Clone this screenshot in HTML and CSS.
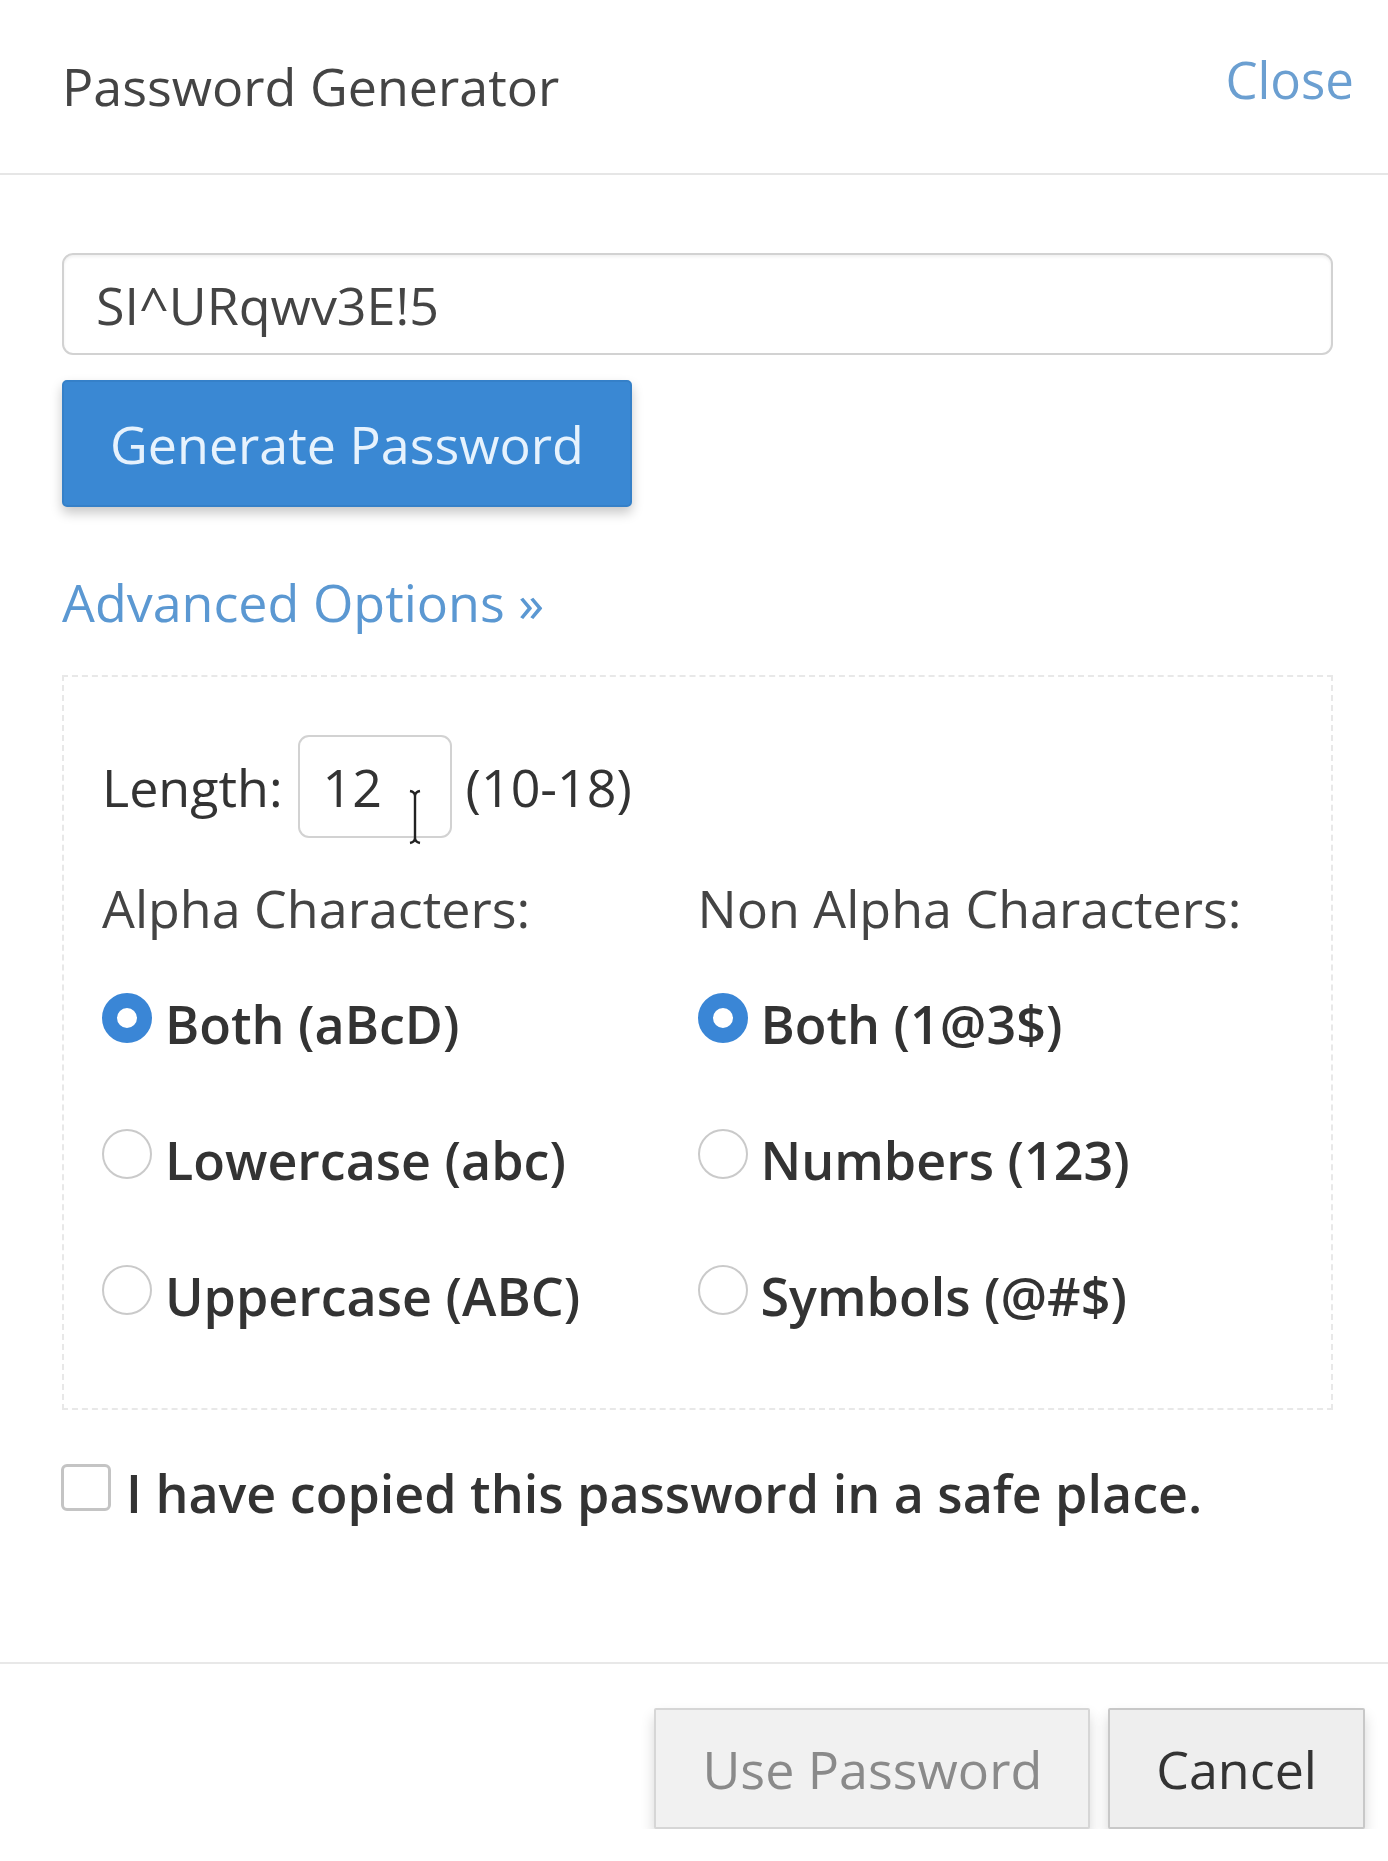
FILE: index.html
```html
<!DOCTYPE html>
<html lang="en">
<head>
<meta charset="utf-8">
<title>Password Generator</title>
<link rel="stylesheet" href="styles.css">
</head>
<body>
<div class="modal">
  <div class="modal-header">
    <h4 class="title">Password Generator</h4>
    <a class="close" href="#">Close</a>
  </div>
  <div class="modal-body">
    <input class="pw-input" type="text" value="SI^URqwv3E!5">
    <button class="btn-generate" type="button">Generate Password</button>
    <a class="advanced" href="#">Advanced Options »</a>
    <div class="options">
      <div class="length-row">
        <span class="label">Length:</span>
        <span class="length-wrap">
          <input class="length-input" type="text" value="12">
          <svg class="ibeam" width="14" height="56" viewBox="0 0 14 56"><path d="M2 2 Q7 3 7 7 L7 49 Q7 53 2 54 M12 2 Q7 3 7 7 M7 49 Q7 53 12 54" fill="none" stroke="#222" stroke-width="2.4"/></svg>
        </span>
        <span class="label">(10-18)</span>
      </div>
      <div class="columns">
        <div class="col">
          <div class="col-title">Alpha Characters:</div>
          <label class="radio"><input type="radio" name="alpha" checked><span>Both (aBcD)</span></label>
          <label class="radio"><input type="radio" name="alpha"><span>Lowercase (abc)</span></label>
          <label class="radio"><input type="radio" name="alpha"><span>Uppercase (ABC)</span></label>
        </div>
        <div class="col">
          <div class="col-title">Non Alpha Characters:</div>
          <label class="radio"><input type="radio" name="nonalpha" checked><span>Both (1@3$)</span></label>
          <label class="radio"><input type="radio" name="nonalpha"><span>Numbers (123)</span></label>
          <label class="radio"><input type="radio" name="nonalpha"><span>Symbols (@#$)</span></label>
        </div>
      </div>
    </div>
    <label class="confirm"><input type="checkbox"><span>I have copied this password in a safe place.</span></label>
  </div>
  <div class="modal-footer">
    <button class="btn btn-use" type="button">Use Password</button>
    <button class="btn btn-cancel" type="button">Cancel</button>
  </div>
</div>
</body>
</html>
```
FILE: styles.css
```css
html, body {
  margin: 0;
  padding: 0;
  background: #ffffff;
}
body {
  font-family: "Open Sans", "DejaVu Sans", sans-serif;
  font-size: 52px;
  line-height: 72px;
  color: #333333;
}
.modal {
  width: 1388px;
}
.modal-header {
  display: flex;
  justify-content: space-between;
  align-items: flex-start;
  padding: 50px 34px 51px 62px;
  border-bottom: 2px solid #e6e6e6;
}
.title {
  margin: 0;
  font-size: 52px;
  line-height: 72px;
  font-weight: 400;
  color: #444444;
}
.close {
  font-size: 51px;
  line-height: 72px;
  margin-top: -7px;
  color: #6b9fd1;
  text-decoration: none;
}
.modal-body {
  padding: 78px 55px 133px 62px;
}
.pw-input {
  display: block;
  box-sizing: border-box;
  width: 100%;
  height: 102px;
  margin: 0;
  padding: 0 32px;
  border: 2px solid #d2d2d2;
  border-radius: 11px;
  box-shadow: inset 0 2px 3px rgba(0, 0, 0, 0.06);
  font-family: inherit;
  font-size: 52px;
  color: #444444;
  background: #fff;
  outline: none;
}
.btn-generate {
  display: block;
  margin-top: 25px;
  height: 127px;
  padding: 0 46px;
  border: 2px solid #3580c8;
  border-radius: 5px;
  background: #3a88d3;
  color: #e6f2fd;
  font-family: inherit;
  font-size: 52px;
  line-height: 72px;
  box-shadow: 0 6px 12px rgba(0, 0, 0, 0.22);
}
.advanced {
  display: block;
  margin-top: 59px;
  width: max-content;
  color: #5b98d2;
  text-decoration: none;
}
.options {
  margin-top: 37px;
  border: 2px dashed #e8e8e8;
  padding: 58px 38px 76px 38px;
}
.length-row {
  display: flex;
  align-items: center;
}
.length-wrap {
  position: relative;
  display: block;
  margin: 0 14px 0 15px;
}
.length-input {
  display: block;
  box-sizing: border-box;
  width: 154px;
  height: 103px;
  margin: 0;
  padding: 0 0 0 23px;
  border: 2px solid #d2d2d2;
  border-radius: 11px;
  font-family: inherit;
  font-size: 52px;
  color: #333;
  background: #fff;
  outline: none;
}
.ibeam {
  position: absolute;
  left: 110px;
  top: 54px;
}
.columns {
  display: grid;
  grid-template-columns: 1fr 1fr;
  margin-top: 34px;
}
.col-title {
  color: #444444;
  margin-bottom: 44px;
}
.radio {
  display: flex;
  align-items: flex-start;
  gap: 13px;
  height: 72px;
  font-weight: 600;
  color: #333333;
}
.radio + .radio {
  margin-top: 64px;
}
.radio input {
  appearance: none;
  -webkit-appearance: none;
  box-sizing: border-box;
  width: 50px;
  height: 50px;
  margin: 5px 0 0 0;
  border: 2px solid #cacaca;
  border-radius: 50%;
  background: #fff;
  flex: none;
}
.radio input:checked {
  border: 15px solid #3a86d6;
}
.confirm {
  display: flex;
  align-items: flex-start;
  gap: 15px;
  margin-top: 47px;
  margin-left: -1px;
  font-weight: 600;
  color: #333333;
}
.confirm input {
  appearance: none;
  -webkit-appearance: none;
  box-sizing: border-box;
  width: 50px;
  height: 47px;
  margin: 7px 0 0 0;
  border: 3px solid #c4c4c4;
  border-radius: 6px;
  background: #fff;
  flex: none;
}
.modal-footer {
  display: flex;
  justify-content: flex-end;
  gap: 18px;
  padding: 44px 23px 0 0;
  border-top: 2px solid #e8e8e8;
}
.btn {
  height: 121px;
  padding: 0 46px;
  border: 2px solid #d6d6d6;
  border-radius: 2px;
  background: #f1f1f1;
  font-family: inherit;
  font-size: 52px;
  line-height: 72px;
  box-shadow: 0 8px 14px rgba(0, 0, 0, 0.16);
}
.btn-use {
  color: #8a8a8a;
}
.btn-cancel {
  color: #333333;
  border-color: #c8c8c8;
  background: #eeeeee;
}
```
